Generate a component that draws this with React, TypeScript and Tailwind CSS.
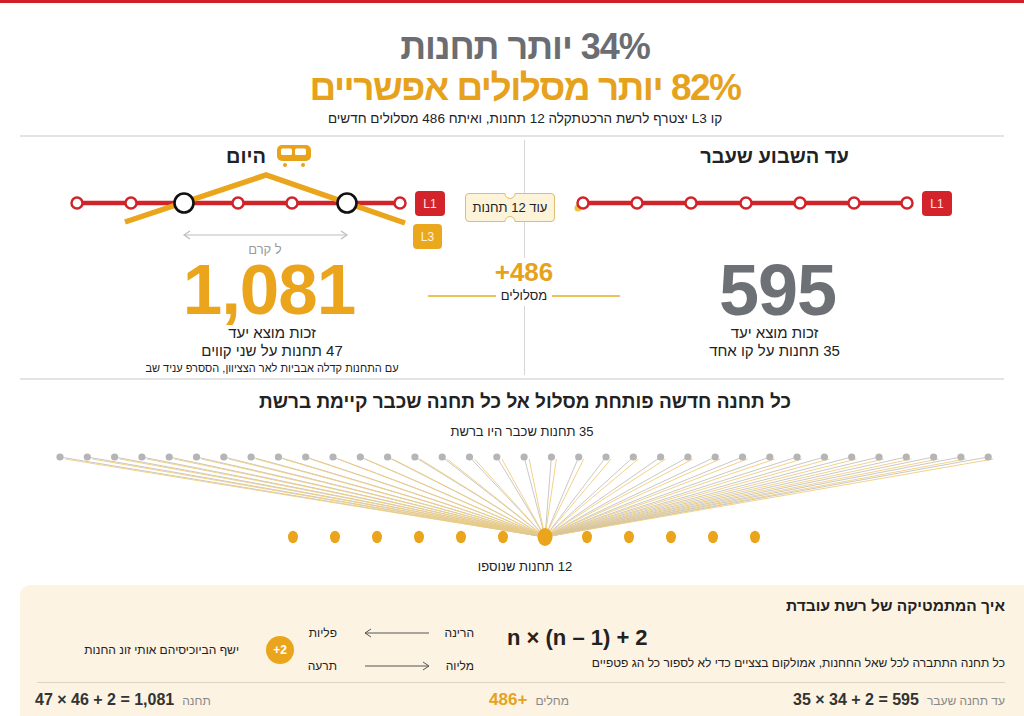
const GOLD = "#e9a31b";
const RED = "#d1232a";

function TrainIcon() {
  return (
    <svg width="36" height="24" viewBox="0 0 36 24">
      <rect x="1" y="1" width="34" height="16" rx="5" fill={GOLD} />
      <rect x="5" y="4.5" width="11" height="6.5" rx="1.5" fill="#fff" />
      <rect x="19" y="4.5" width="11" height="6.5" rx="1.5" fill="#fff" />
      <circle cx="9" cy="21" r="2" fill={GOLD} />
      <circle cx="27" cy="21" r="2" fill={GOLD} />
    </svg>
  );
}

function Station({ x, big }: { x: number; big?: boolean }) {
  if (big) return <circle cx={x} cy={33} r={9.5} fill="#fff" stroke="#111" strokeWidth={2.6} />;
  return <circle cx={x} cy={33} r={5.5} fill="#fff" stroke={RED} strokeWidth={2.5} />;
}

function LineBadge({ x, y, w, label, fill, color }: { x: number; y: number; w: number; label: string; fill: string; color: string }) {
  return (
    <g>
      <rect x={x} y={y} width={w} height={25} rx={4} fill={fill} />
      <text x={x + w / 2} y={y + 17} textAnchor="middle" fontSize="12" fill={color} fontFamily="Liberation Sans, sans-serif">
        {label}
      </text>
    </g>
  );
}

function TodayDiagram() {
  const stations = [57, 111, 164, 218, 272, 327, 380];
  return (
    <svg width="504" height="88" viewBox="0 0 504 88">
      <line x1="57" y1="33" x2="380" y2="33" stroke={RED} strokeWidth="4.5" />
      <polyline points="105,52 246,5 385,53" fill="none" stroke="#eaa51c" strokeWidth="5.5" />
      {stations.map((x, i) => (
        <Station key={x} x={x} big={i === 2 || i === 5} />
      ))}
      <LineBadge x={395} y={21} w={30} label="L1" fill="#d3242b" color="#fde8e8" />
      <LineBadge x={393} y={54} w={29} label="L3" fill="#eba81f" color="#fff4dc" />
      <line x1="164" y1="65" x2="327" y2="65" stroke="#bdbdbd" strokeWidth="1.2" />
      <polyline points="170,61 164,65 170,69" fill="none" stroke="#bdbdbd" strokeWidth="1.2" />
      <polyline points="321,61 327,65 321,69" fill="none" stroke="#bdbdbd" strokeWidth="1.2" />
      <text x="245" y="84" textAnchor="middle" fontSize="13" fill="#9a9a9a" fontFamily="Liberation Sans, sans-serif">
        ל קרם
      </text>
    </svg>
  );
}

function BeforeDiagram() {
  const stations = [58, 112, 166, 221, 275, 329, 382];
  return (
    <svg width="499" height="88" viewBox="0 0 499 88">
      <line x1="58" y1="33" x2="382" y2="33" stroke={RED} strokeWidth="4.5" />
      <circle cx="53" cy="38" r="3.5" fill="#f0c040" />
      {stations.map((x) => (
        <Station key={x} x={x} />
      ))}
      <LineBadge x={397} y={21} w={30} label="L1" fill="#d3242b" color="#fde8e8" />
    </svg>
  );
}

function Fan() {
  const grays = Array.from({ length: 35 }, (_, i) => 60 + i * 27.3);
  const golds = Array.from({ length: 12 }, (_, i) => 293 + i * 42);
  const cx = 545;
  const cy = 92;
  return (
    <svg width="1024" height="105" viewBox="0 0 1024 105" className="block">
      {grays.map((x) => (
        <g key={x}>
          <line x1={x} y1={12} x2={cx} y2={cy} stroke="#c2c2c2" strokeWidth="0.9" />
          <line x1={x + 5} y1={14} x2={cx} y2={cy} stroke="#f2cd78" strokeWidth="0.9" />
        </g>
      ))}
      {grays.map((x) => (
        <circle key={x} cx={x} cy={12} r={3.6} fill="#b5b5b5" />
      ))}
      {golds.map((x, i) =>
        i === 6 ? (
          <ellipse key={x} cx={x} cy={cy} rx={7.5} ry={9} fill="#eba51d" />
        ) : (
          <ellipse key={x} cx={x} cy={cy} rx={5} ry={6.2} fill="#eba51d" />
        )
      )}
    </svg>
  );
}

function TicketBadge() {
  return (
    <div className="relative w-[90px] h-[29px]">
      <svg width="90" height="29" viewBox="0 0 90 29" className="absolute inset-0">
        <path
          d="M4,0.5 H40 A5,5 0 0 0 50,0.5 H86 Q89.5,0.5 89.5,4 V25 Q89.5,28.5 86,28.5 H50 A5,5 0 0 0 40,28.5 H4 Q0.5,28.5 0.5,25 V4 Q0.5,0.5 4,0.5 Z"
          fill="#fdf3d9"
          stroke="#dcbd72"
          strokeWidth="1"
        />
      </svg>
      <div className="relative h-full flex items-center justify-center text-[13px] text-[#222]">עוד 12 תחנות</div>
    </div>
  );
}

function Arrow({ dir }: { dir: "left" | "right" }) {
  return (
    <svg width="66" height="10" viewBox="0 0 66 10">
      <line x1="1" y1="5" x2="65" y2="5" stroke="#555" strokeWidth="1" />
      {dir === "left" ? (
        <polyline points="7,1 1,5 7,9" fill="none" stroke="#555" strokeWidth="1" />
      ) : (
        <polyline points="59,1 65,5 59,9" fill="none" stroke="#555" strokeWidth="1" />
      )}
    </svg>
  );
}

export default function App() {
  return (
    <div
      dir="rtl"
      className="w-[1024px] h-[716px] overflow-hidden bg-white text-[#222] font-['Liberation_Sans','DejaVu_Sans',sans-serif]"
    >
      {/* top rule */}
      <div className="h-[3px] bg-[#cf1f28]" />

      {/* headline */}
      <div className="h-[132px] flex flex-col items-center pt-[24px] pl-[26px]">
        <div className="h-[40px] leading-[40px] text-[36px] font-bold text-[#6b6d72] tracking-[-1px]">34% יותר תחנות</div>
        <div className="h-[42px] leading-[42px] text-[37px] font-bold text-[#e6a21c] tracking-[-1.5px]">82% יותר מסלולים אפשריים</div>
        <div className="leading-[20px] text-[13.5px]">קו L3 יצטרף לרשת הרכטתקלה 12 תחנות, ואיתח 486 מסלולים חדשים</div>
      </div>
      <div className="mx-[20px] h-[2px] bg-[#e3e3e3]" />

      {/* compare */}
      <div className="relative h-[241px] flex">
        <div className="w-[499px] flex flex-col items-center pt-[4px]">
          <div className="h-[29px] flex items-center text-[20px] font-bold">עד השבוע שעבר</div>
          <BeforeDiagram />
          <div className="mt-[2px] h-[60px] leading-[60px] text-[72px] font-bold text-[#6d7075] tracking-[-1px] pl-[6px]">595</div>
          <div className="mt-[4px] leading-[18px] text-[15px]">זכות מוצא יעד</div>
          <div className="leading-[18px] text-[15px]">35 תחנות על קו אחד</div>
        </div>
        <div className="w-px mt-[3px] mb-[3px] bg-[#d6d6d6]" />
        <div className="w-[504px] flex flex-col items-center pt-[4px]">
          <div className="h-[29px] flex items-center gap-[10px] pr-[6px]">
            <TrainIcon />
            <span className="text-[20px] font-bold">היום</span>
          </div>
          <TodayDiagram />
          <div className="mt-[2px] h-[60px] leading-[60px] text-[71px] font-bold text-[#eaa51c] tracking-[-1px] pr-[6px]" dir="ltr">1,081</div>
          <div className="mt-[4px] leading-[18px] text-[15px]">זכות מוצא יעד</div>
          <div className="leading-[18px] text-[15px]">47 תחנות על שני קווים</div>
          <div className="leading-[16px] text-[11px]">עם התחנות קדלה אבביות לאר הצציוון, הססרפ עניד שב</div>
        </div>

        {/* overlays on the divider */}
        <div className="absolute left-[465px] top-[56px]">
          <TicketBadge />
        </div>
        <div className="absolute left-[428px] top-[121px] w-[192px] bg-white flex flex-col items-center">
          <div dir="ltr" className="h-[28px] leading-[28px] text-[26px] font-bold text-[#e6a21c]">+486</div>
          <div className="h-[20px] w-full flex items-center">
            <div className="flex-1 h-[2px] bg-[#eec25a]" />
            <span className="px-[5px] text-[13px] leading-[20px]">מסלולים</span>
            <div className="flex-1 h-[2px] bg-[#eec25a]" />
          </div>
        </div>
      </div>
      <div className="mx-[20px] h-[2px] bg-[#e3e3e3]" />

      {/* fan */}
      <div className="flex flex-col items-center">
        <div className="mt-[8px] h-[28px] leading-[28px] text-[19px] font-bold pl-[26px]">כל תחנה חדשה פותחת מסלול אל כל תחנה שכבר קיימת ברשת</div>
        <div className="mt-[7px] leading-[18px] text-[13px] pl-[20px]">35 תחנות שכבר היו ברשת</div>
        <div className="mt-[4px]">
          <Fan />
        </div>
        <div className="mt-[8px] leading-[18px] text-[13px] pl-[26px]">12 תחנות שנוספו</div>
      </div>

      {/* math card */}
      <div className="mt-[9px] ml-[20px] h-[131px] rounded-tl-[10px] bg-[#fcf3e2] pr-[19px] pl-[15px]">
        <div className="h-[97px] flex items-start pt-[11px]">
          <div className="w-[498px] flex flex-col">
            <div className="leading-[20px] text-[15.5px] font-bold">איך המתמטיקה של רשת עובדת</div>
            <div dir="ltr" className="mt-[7px] leading-[30px] text-[22px] font-bold text-left">n × (n – 1) + 2</div>
            <div className="mt-[1px] leading-[18px] text-[12px]">כל תחנה התתברה לכל שאל החחנות, אמולקום בצציים כדי לא לספור כל הג פטפיים</div>
          </div>
          <div className="mr-[33px] mt-[27px] flex items-center">
            <div className="flex flex-col gap-[13px] text-[12px]">
              <div className="h-[20px] flex items-center">
                <span className="w-[40px]">הרינה</span>
                <span className="mr-[4px] flex">
                  <Arrow dir="left" />
                </span>
                <span className="mr-[27px] w-[30px]">פליות</span>
              </div>
              <div className="h-[20px] flex items-center">
                <span className="w-[40px]">מליוה</span>
                <span className="mr-[4px] flex">
                  <Arrow dir="right" />
                </span>
                <span className="mr-[27px] w-[30px]">תרעה</span>
              </div>
            </div>
            <div dir="ltr" className="mr-[13px] w-[28px] h-[28px] rounded-full bg-[#eba51d] text-white text-[12px] font-bold flex items-center justify-center">
              +2
            </div>
            <div className="mr-[27px] text-[12px]">ישף הביוכיסיהם אותי זונ החנות</div>
          </div>
        </div>
        <div className="ml-[2px] h-px bg-[#ddd3bf]" />
        <div className="h-[33px] grid grid-cols-3 items-center">
          <div className="flex items-baseline gap-[8px]">
            <span className="text-[12px] text-[#888]">עד תחנה שעבר</span>
            <span dir="ltr" className="text-[16px] font-bold text-[#333]">35 × 34 + 2 = 595</span>
          </div>
          <div className="flex items-baseline justify-center gap-[8px] pl-[18px]">
            <span className="text-[12px] text-[#888]">מחלים</span>
            <span dir="ltr" className="text-[17px] font-bold text-[#e6a21c]">486+</span>
          </div>
          <div className="flex items-baseline justify-end gap-[8px]">
            <span className="text-[12px] text-[#888]">תחנה</span>
            <span dir="ltr" className="text-[16px] font-bold text-[#333]">47 × 46 + 2 = 1,081</span>
          </div>
        </div>
      </div>
    </div>
  );
}
